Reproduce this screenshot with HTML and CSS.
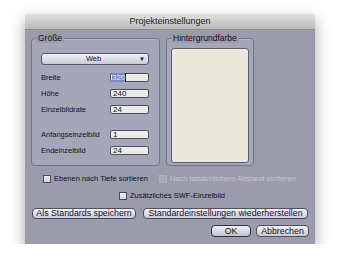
FILE: index.html
```html
<!DOCTYPE html>
<html lang="de">
  <head>
    <meta charset="UTF-8" />
    <title>Projekteinstellungen</title>
    <link rel="stylesheet" href="styles.css">
  </head>
  <body>
    <div class="dialog">
      <div class="titlebar">Projekteinstellungen</div>
      <div class="content">
        <div class="groups">
          <div class="group size">
            <span class="legend">Größe</span>
            <div class="popup"><span>Web</span><span class="arrow">▼</span></div>
            <div class="row"><label>Breite</label><span class="input sel"><span class="hl">320</span></span></div>
            <div class="row"><label>Höhe</label><span class="input">240</span></div>
            <div class="row"><label>Einzelbildrate</label><span class="input">24</span></div>
            <div class="row gap"><label>Anfangseinzelbild</label><span class="input">1</span></div>
            <div class="row"><label>Endeinzelbild</label><span class="input">24</span></div>
          </div>
          <div class="group bg">
            <span class="legend">Hintergrundfarbe</span>
            <div class="swatch"></div>
          </div>
        </div>
        <div class="checks">
          <span class="check"><span class="box"></span>Ebenen nach Tiefe sortieren</span>
          <span class="check disabled"><span class="box"></span>Nach tatsächlichem Abstand sortieren</span>
        </div>
        <div class="checks center">
          <span class="check"><span class="box"></span>Zusätzliches SWF-Einzelbild</span>
        </div>
        <div class="buttons">
          <button class="btn save">Als Standards speichern</button>
          <button class="btn reset">Standardeinstellungen wiederherstellen</button>
        </div>
        <div class="buttons right">
          <button class="btn ok">OK</button>
          <button class="btn cancel">Abbrechen</button>
        </div>
      </div>
    </div>
  </body>
</html>
```
FILE: styles.css
```css
body {
  margin: 0;
  background: #fff;
  font-family: "Liberation Sans", Arial, sans-serif;
  font-size: 7.5px;
  color: #111118;
}
.dialog {
  width: 290px;
  margin: 14px 0 0 25px;
  background: #9c9bac;
  box-shadow: 0 6px 14px rgba(0, 0, 0, 0.35);
}
.titlebar {
  height: 15px;
  line-height: 15px;
  text-align: center;
  font-size: 9px;
  background: linear-gradient(#e2e2e2, #b9b9bb);
  border-bottom: 1px solid #8a8a8c;
  color: #222;
}
.content {
  height: 214px;
  padding: 8px 6px 0 6px;
  box-sizing: border-box;
  white-space: nowrap;
}
.groups {
  display: flex;
  gap: 6px;
}
.group {
  position: relative;
  height: 128px;
  box-sizing: border-box;
  border: 1px solid #73748a;
  border-radius: 4px;
  background: #a5a6b8;
  box-shadow: inset 0 1px 0 #b3b4c4;
}
.legend {
  position: absolute;
  top: -6px;
  left: 4px;
  padding: 0 2px;
  background: #9c9bac;
  font-size: 8.5px;
  line-height: 10px;
}
.size {
  width: 129px;
  padding: 14px 10px 0 9px;
}
.bg {
  width: 88px;
  padding: 9px 4px 0 4px;
}
.popup {
  display: flex;
  height: 10px;
  line-height: 10px;
  padding: 0 3px 0 0;
  border: 1px solid #55566a;
  border-radius: 3px;
  background: linear-gradient(#f2f2f7, #c9cad8);
  font-size: 7.5px;
}
.popup span:first-child {
  flex: 1;
  text-align: center;
  padding-left: 6px;
}
.arrow {
  font-size: 6px;
}
.row {
  display: flex;
  justify-content: space-between;
  align-items: center;
  margin-top: 7px;
  height: 9px;
}
.row.gap {
  margin-top: 16px;
}
.size .popup + .row {
  margin-top: 8px;
}
.input {
  width: 39px;
  height: 9px;
  line-height: 8px;
  box-sizing: border-box;
  border: 1px solid #4e4f60;
  border-radius: 2px;
  background: #ebebe8;
  padding-left: 2px;
  font-size: 8px;
}
.input.sel {
  padding-left: 1px;
}
.hl {
  background: #7d88c8;
  color: #e4e8ff;
  border-right: 1px solid #000;
}
.swatch {
  height: 113px;
  border: 1px solid #5e5f70;
  border-radius: 3px;
  background: #ebe9dc;
}
.checks {
  display: flex;
  gap: 11px;
  margin: 8px 0 0 12px;
  height: 9px;
  line-height: 9px;
}
.checks.center {
  justify-content: center;
  margin: 8px 0 0 0;
  padding-left: 4px;
}
.check {
  display: flex;
  align-items: center;
  gap: 3px;
}
.box {
  width: 6px;
  height: 6px;
  border: 1px solid #4a4a58;
  background: linear-gradient(#f4f4f6, #cfd0da);
}
.disabled {
  color: #c4c4d2;
}
.disabled .box {
  border-color: #b6b6c4;
  background: #a8a8ba;
}
.buttons {
  display: flex;
  gap: 7px;
  margin: 8px 0 0 1px;
}
.buttons.right {
  justify-content: flex-end;
  gap: 5px;
  margin: 6px 0 0 0;
}
.btn {
  font-family: "Liberation Sans", Arial, sans-serif;
  font-size: 8.8px;
  color: #111118;
  height: 11px;
  line-height: 9px;
  padding: 0;
  border: 1px solid #4e4f62;
  border-radius: 4px;
  background: linear-gradient(#f4f4f8, #c9cad8);
  white-space: nowrap;
}
.btn.save {
  width: 104px;
}
.btn.reset {
  width: 165px;
}
.btn.ok {
  width: 40px;
  border-color: #2f3040;
  background: linear-gradient(#f0f0f4, #c0c1cf);
}
.btn.cancel {
  width: 53px;
}
.buttons.right .btn {
  height: 12px;
}
```
